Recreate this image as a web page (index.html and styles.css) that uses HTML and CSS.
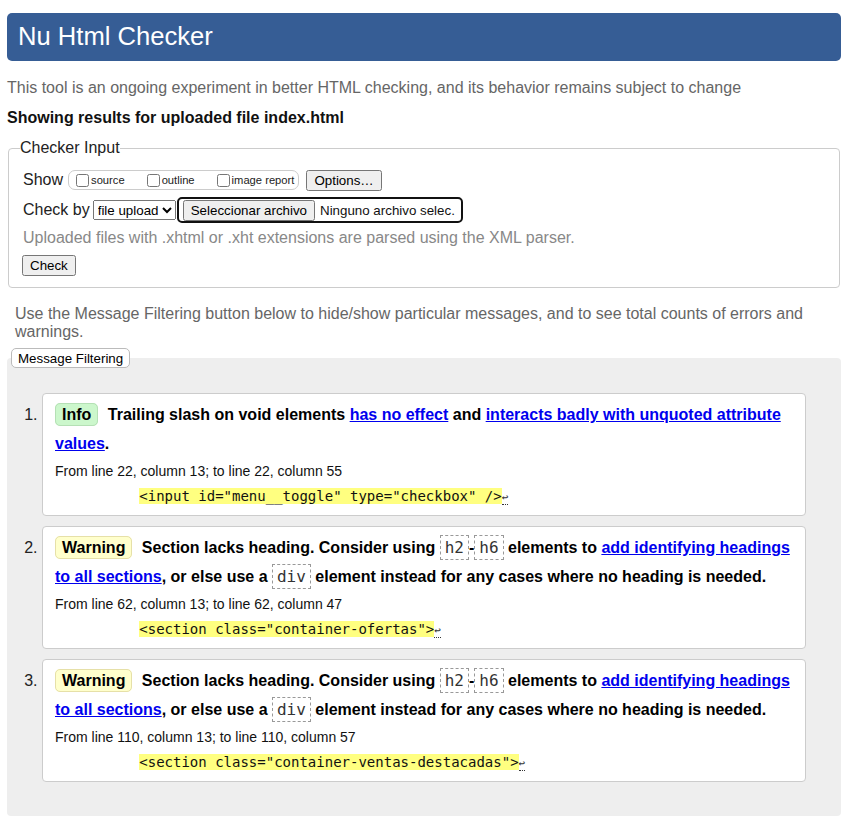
FILE: index.html
```html
<!DOCTYPE html>
<html lang="en">
<head>
<meta charset="utf-8">
<title>Nu Html Checker</title>
<link rel="stylesheet" href="styles.css">
</head>
<body>
<h1 class="title">Nu Html Checker</h1>
<p class="intro">This tool is an ongoing experiment in better HTML checking, and its behavior remains subject to change</p>
<p class="results-for">Showing results for uploaded file index.html</p>
<fieldset class="checker">
  <legend class="checker-legend">Checker Input</legend>
  <div class="row row-show">
    <span class="row-label">Show</span>
    <span class="show-box">
      <label class="opt"><input type="checkbox" class="cb"><span>source</span></label>
      <label class="opt"><input type="checkbox" class="cb"><span>outline</span></label>
      <label class="opt opt-last"><input type="checkbox" class="cb"><span>image report</span></label>
    </span>
    <button class="btn btn-options" type="button">Options…</button>
  </div>
  <div class="row row-checkby">
    <span class="row-label">Check by</span>
    <select class="sel"><option>file upload</option></select>
    <span class="file-input">
      <button class="btn btn-file" type="button">Seleccionar archivo</button>
      <span class="file-name">Ninguno archivo selec.</span>
    </span>
  </div>
  <p class="instructions">Uploaded files with .xhtml or .xht extensions are parsed using the XML parser.</p>
  <div class="row row-submit">
    <button class="btn" type="button">Check</button>
  </div>
</fieldset>
<p class="filter-note">Use the Message Filtering button below to hide/show particular messages, and to see total counts of errors and warnings.</p>
<button class="filter-btn" type="button">Message Filtering</button>
<div class="results">
  <ol class="messages">
    <li class="msg">
      <p class="msg-text"><span class="badge badge-info">Info</span> Trailing slash on void elements <a href="#">has no effect</a> and <a href="#">interacts badly with unquoted attribute values</a>.</p>
      <p class="location">From line 22, column 13; to line 22, column 55</p>
      <p class="extract"><code class="extract-code">          <mark class="hl">&lt;input id="menu__toggle" type="checkbox" /&gt;</mark><span class="lf">↩</span></code></p>
    </li>
    <li class="msg">
      <p class="msg-text"><span class="badge badge-warn">Warning</span> Section lacks heading. Consider using <code class="inline-code">h2</code>-<code class="inline-code">h6</code> elements to <a href="#">add identifying headings to all sections</a>, or else use a <code class="inline-code">div</code> element instead for any cases where no heading is needed.</p>
      <p class="location">From line 62, column 13; to line 62, column 47</p>
      <p class="extract"><code class="extract-code">          <mark class="hl">&lt;section class="container-ofertas"&gt;</mark><span class="lf">↩</span></code></p>
    </li>
    <li class="msg">
      <p class="msg-text"><span class="badge badge-warn">Warning</span> Section lacks heading. Consider using <code class="inline-code">h2</code>-<code class="inline-code">h6</code> elements to <a href="#">add identifying headings to all sections</a>, or else use a <code class="inline-code">div</code> element instead for any cases where no heading is needed.</p>
      <p class="location">From line 110, column 13; to line 110, column 57</p>
      <p class="extract"><code class="extract-code">          <mark class="hl">&lt;section class="container-ventas-destacadas"&gt;</mark><span class="lf">↩</span></code></p>
    </li>
  </ol>
</div>
</body>
</html>
```
FILE: styles.css
```css
html, body {
  background: #fff;
}
body {
  margin: 0;
  padding: 13px 4px 0 7px;
  font-family: "Liberation Sans", Arial, sans-serif;
  font-size: 16px;
  color: #000;
}
.title {
  margin: 0;
  height: 48px;
  line-height: 47px;
  padding: 0 11px;
  background: #365d95;
  color: #fff;
  font-size: 25.6px;
  font-weight: normal;
  border-radius: 5px;
}
.intro {
  margin: 18px 0 12px;
  line-height: 18px;
  color: #666;
}
.results-for {
  margin: 0 0 12px;
  line-height: 18px;
  font-weight: bold;
  color: #111;
}
.checker {
  margin: 0 1px;
  padding: 12px 14px 11px 14px;
  border: 1px solid #ccc;
  border-radius: 4px;
}
.checker-legend {
  padding: 0;
  margin-left: -3px;
  line-height: 18px;
  color: #222;
}
.row {
  display: flex;
  align-items: center;
}
.row-show {
  height: 22px;
}
.row-checkby {
  height: 28px;
  margin-top: 5px;
}
.row-label {
  color: #222;
}
.show-box {
  display: inline-flex;
  align-items: center;
  margin-left: 5px;
  height: 18px;
  padding: 0 4px 0 3px;
  border: 1px solid #ccc;
  border-radius: 7px;
}
.opt {
  display: inline-flex;
  align-items: center;
  font-size: 11.2px;
  margin-right: 18px;
  color: #222;
}
.opt-last {
  margin-right: 0;
}
.cb {
  margin: 0 2px 0 4px;
  width: 13px;
  height: 13px;
}
.btn {
  font-family: "Liberation Sans", Arial, sans-serif;
  font-size: 13.333px;
}
.btn-options {
  margin-left: 7px;
}
.sel {
  margin-left: 3px;
  font-family: "Liberation Sans", Arial, sans-serif;
  font-size: 13.333px;
  height: 20px;
}
.file-input {
  display: inline-flex;
  align-items: center;
  margin-left: 1px;
  height: 22px;
  padding: 0 6px 0 4px;
  border: 2px solid #111;
  border-radius: 5px;
  font-size: 13.333px;
}
.btn-file {
  margin-right: 5px;
}
.file-name {
  color: #111;
}
.instructions {
  margin: 5px 0 0;
  line-height: 18px;
  color: #888;
}
.row-submit {
  margin-top: 8px;
  margin-left: -1px;
}
.filter-note {
  margin: 17px 0 0 8px;
  padding-right: 30px;
  line-height: 18px;
  color: #666;
}
.filter-btn {
  display: block;
  position: relative;
  z-index: 1;
  margin: 7px 0 -10px 4px;
  height: 20px;
  padding: 0 6px;
  background: #fff;
  border: 1px solid #bbb;
  border-radius: 5px;
  font-family: "Liberation Sans", Arial, sans-serif;
  font-size: 13.333px;
  color: #000;
}
.results {
  background: #eee;
  border-radius: 4px;
  padding: 35px 35px 34px 35px;
}
.messages {
  margin: 0;
  padding: 0;
  list-style: decimal outside;
}
.msg {
  background: #fff;
  border: 1px solid #ccc;
  border-radius: 4px;
  padding: 6px 12px 10px;
  margin-bottom: 10px;
}
.msg:last-child {
  margin-bottom: 0;
}
.msg::marker {
  color: #222;
}
.msg-text {
  margin: 0;
  line-height: 29px;
  font-weight: bold;
}
.msg-text a {
  color: #00e;
  text-decoration: underline;
}
.badge {
  padding: 2px 6px;
  margin-right: 5px;
  border: 1px solid;
  border-radius: 5px;
  line-height: 18px;
}
.badge-info {
  background: #ccf7cc;
  border-color: #b5e0b5;
}
.badge-warn {
  background: #ffffcc;
  border-color: #e6e0a8;
}
.inline-code {
  font-family: "DejaVu Sans Mono", monospace;
  font-size: 16px;
  font-weight: normal;
  line-height: 18px;
  color: #333;
  padding: 2px 4px;
  border: 1px dashed #999;
}
.location {
  margin: 4px 0 0;
  font-size: 14px;
  line-height: 18px;
  color: #111;
}
.extract {
  margin: 7px 0 0;
  line-height: 18px;
  height: 18px;
}
.extract-code {
  font-family: "DejaVu Sans Mono", monospace;
  font-size: 14px;
  line-height: 16px;
  white-space: pre;
  color: #111;
}
.hl {
  background: #ffff80;
  color: #111;
}
.lf {
  font-size: 11px;
  line-height: 12px;
  border-bottom: 1px dotted #333;
  color: #333;
}
```
